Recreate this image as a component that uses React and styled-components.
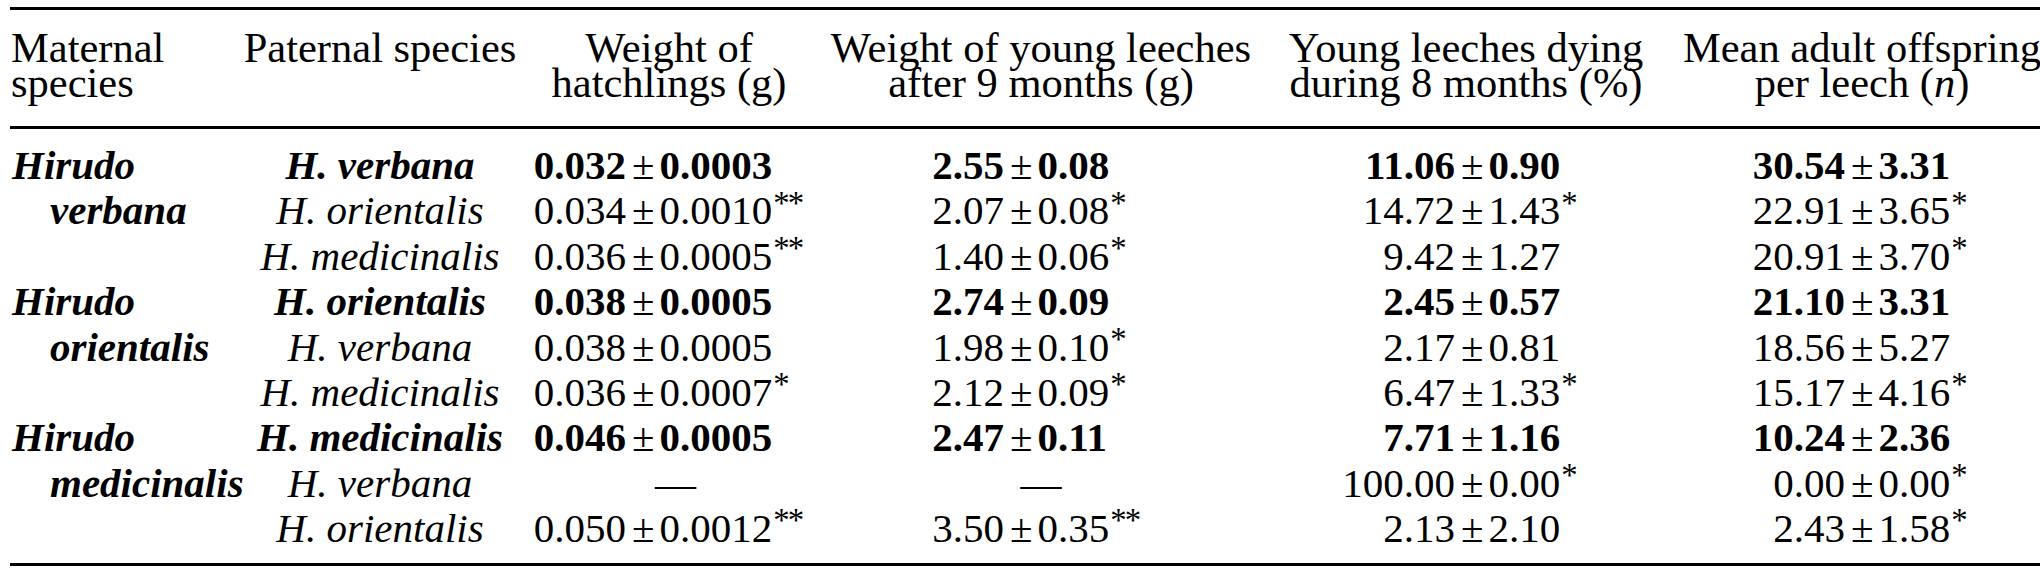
import React from 'react';
import styled, { createGlobalStyle } from 'styled-components';

const GlobalStyle = createGlobalStyle`
  html, body {
    margin: 0;
    padding: 0;
    background: #fff;
    overflow: hidden;
  }
  body {
    font-family: "Liberation Serif", "Times New Roman", serif;
    color: #000;
  }
`;

// column widths shared by header and body rows
const COLS = '222px 296px 282px 462px 388px 404px';

const Table = styled.div`
  margin: 7px 0 0 10px;
  width: 2054px;
  border-top: 3px solid #000;
  font-size: 41px;
`;

const HeaderRow = styled.div`
  display: grid;
  grid-template-columns: ${COLS};
  box-sizing: border-box;
  height: 119px;
  padding-top: 20px;
  border-bottom: 3px solid #000;
  font-size: 42.5px;
  line-height: 35px;
`;

const HeadCell = styled.div`
  text-align: ${p => (p.$left ? 'left' : 'center')};
  padding-left: ${p => (p.$left ? '1px' : '0')};
  white-space: nowrap;
`;

const Body = styled.div`
  padding: 14px 0 11px;
  border-bottom: 3px solid #000;
`;

const Row = styled.div`
  display: grid;
  grid-template-columns: ${COLS};
  height: 45.4px;
  line-height: 45.4px;
  white-space: nowrap;
`;

const Maternal = styled.div`
  font-weight: 700;
  font-style: italic;
  padding-left: ${p => (p.$indent ? '40px' : '2px')};
`;

const Paternal = styled.div`
  font-style: italic;
  font-weight: ${p => (p.$bold ? 700 : 400)};
  text-align: center;
`;

const ValueCell = styled.div`
  display: flex;
  align-items: baseline;
  font-weight: ${p => (p.$bold ? 700 : 400)};
`;

const Lead = styled.span`
  flex: none;
  width: ${p => p.$w}px;
  text-align: right;
`;

const Pm = styled.span`
  font-weight: 400;
  margin: 0 5px 0 6px;
`;

const Star = styled.span`
  font-weight: 400;
  font-size: 0.8em;
  line-height: 0;
  position: relative;
  top: -0.33em;
  margin-left: 1px;
  letter-spacing: -2px;
`;

const Dash = styled.div`
  text-align: center;
  padding-left: ${p => p.$shift || 0}px;
`;

// right edge of the mean, measured from the left of each value column
const LEADS = [98, 194, 183, 185];
const DASH_SHIFT = [13, 0, 0, 0];

const rows = [
  { mat: 'Hirudo', pat: 'H. verbana', bold: true,
    v: [['0.032', '0.0003'], ['2.55', '0.08'], ['11.06', '0.90'], ['30.54', '3.31']] },
  { mat: 'verbana', indent: true, pat: 'H. orientalis',
    v: [['0.034', '0.0010', '**'], ['2.07', '0.08', '*'], ['14.72', '1.43', '*'], ['22.91', '3.65', '*']] },
  { pat: 'H. medicinalis',
    v: [['0.036', '0.0005', '**'], ['1.40', '0.06', '*'], ['9.42', '1.27'], ['20.91', '3.70', '*']] },
  { mat: 'Hirudo', pat: 'H. orientalis', bold: true,
    v: [['0.038', '0.0005'], ['2.74', '0.09'], ['2.45', '0.57'], ['21.10', '3.31']] },
  { mat: 'orientalis', indent: true, pat: 'H. verbana',
    v: [['0.038', '0.0005'], ['1.98', '0.10', '*'], ['2.17', '0.81'], ['18.56', '5.27']] },
  { pat: 'H. medicinalis',
    v: [['0.036', '0.0007', '*'], ['2.12', '0.09', '*'], ['6.47', '1.33', '*'], ['15.17', '4.16', '*']] },
  { mat: 'Hirudo', pat: 'H. medicinalis', bold: true,
    v: [['0.046', '0.0005'], ['2.47', '0.11'], ['7.71', '1.16'], ['10.24', '2.36']] },
  { mat: 'medicinalis', indent: true, pat: 'H. verbana',
    v: [null, null, ['100.00', '0.00', '*'], ['0.00', '0.00', '*']] },
  { pat: 'H. orientalis',
    v: [['0.050', '0.0012', '**'], ['3.50', '0.35', '**'], ['2.13', '2.10'], ['2.43', '1.58', '*']] },
];

function Value({ val, col, bold }) {
  if (!val) return <Dash $shift={DASH_SHIFT[col]}>—</Dash>;
  const [mean, err, star] = val;
  return (
    <ValueCell $bold={bold}>
      <Lead $w={LEADS[col]}>{mean}</Lead>
      <Pm>±</Pm>
      <span>{err}</span>
      {star && <Star>{star}</Star>}
    </ValueCell>
  );
}

export default function App() {
  return (
    <>
      <GlobalStyle />
      <Table>
        <HeaderRow>
          <HeadCell $left>Maternal<br />species</HeadCell>
          <HeadCell>Paternal species</HeadCell>
          <HeadCell>Weight of<br />hatchlings (g)</HeadCell>
          <HeadCell>Weight of young leeches<br />after 9 months (g)</HeadCell>
          <HeadCell>Young leeches dying<br />during 8 months (%)</HeadCell>
          <HeadCell>Mean adult offspring<br />per leech (<i>n</i>)</HeadCell>
        </HeaderRow>
        <Body>
          {rows.map((r, i) => (
            <Row key={i}>
              <Maternal $indent={r.indent}>{r.mat || ''}</Maternal>
              <Paternal $bold={r.bold}>{r.pat}</Paternal>
              {r.v.map((val, c) => (
                <Value key={c} val={val} col={c} bold={r.bold} />
              ))}
            </Row>
          ))}
        </Body>
      </Table>
    </>
  );
}
